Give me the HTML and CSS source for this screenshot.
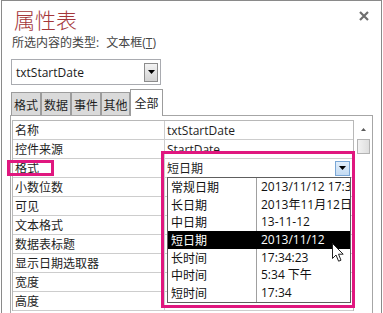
FILE: index.html
```html
<!DOCTYPE html>
<html lang="zh-CN">
<head>
<meta charset="utf-8">
<title>属性表</title>
<link rel="stylesheet" href="styles.css">
</head>
<body>
<div class="window">
  <div class="header">
    <h1 class="title">属性表</h1>
    <svg class="close" width="10" height="10" viewBox="0 0 10 10"><path d="M1 1 L9 9 M9 1 L1 9" stroke="#6e6e6e" stroke-width="2.2" fill="none"/></svg>
  </div>
  <div class="subtitle">所选内容的类型: 文本框(<u>T</u>)</div>
  <div class="combo">
    <span>txtStartDate</span>
    <span class="combo-btn"><svg width="7" height="4" viewBox="0 0 7 4"><polygon points="0,0 7,0 3.5,4" fill="#000"/></svg></span>
  </div>
  <div class="tabs">
    <div class="tab">格式</div>
    <div class="tab">数据</div>
    <div class="tab">事件</div>
    <div class="tab narrow">其他</div>
    <div class="tab active">全部</div>
  </div>
  <div class="panel">
    <div class="grid">
      <div class="row"><div class="name">名称</div><div class="val">txtStartDate</div></div>
      <div class="row"><div class="name">控件来源</div><div class="val">StartDate</div></div>
      <div class="row"><div class="name">格式</div><div class="val val-drop"><span>短日期</span><span class="drop-btn"><svg width="7" height="4" viewBox="0 0 7 4"><polygon points="0,0 7,0 3.5,4" fill="#000"/></svg></span></div></div>
      <div class="row"><div class="name">小数位数</div><div class="val"></div></div>
      <div class="row"><div class="name">可见</div><div class="val"></div></div>
      <div class="row"><div class="name">文本格式</div><div class="val"></div></div>
      <div class="row"><div class="name">数据表标题</div><div class="val"></div></div>
      <div class="row"><div class="name">显示日期选取器</div><div class="val"></div></div>
      <div class="row"><div class="name">宽度</div><div class="val"></div></div>
      <div class="row"><div class="name">高度</div><div class="val"></div></div>
    </div>
    <div class="scrollbar">
      <div class="sb-up"><svg width="5" height="3" viewBox="0 0 5 3"><polygon points="0,3 5,3 2.5,0" fill="#5a5a5a"/></svg></div>
      <div class="sb-thumb"></div>
    </div>
  </div>

  <div class="hl hl-label"></div>
  <div class="hl hl-field"></div>

  <div class="list">
    <div class="item"><div class="k">常规日期</div><div class="v">2013/11/12 17:34:23</div></div>
    <div class="item"><div class="k">长日期</div><div class="v">2013年11月12日</div></div>
    <div class="item"><div class="k">中日期</div><div class="v">13-11-12</div></div>
    <div class="item sel"><div class="k">短日期</div><div class="v">2013/11/12</div></div>
    <div class="item"><div class="k">长时间</div><div class="v">17:34:23</div></div>
    <div class="item"><div class="k">中时间</div><div class="v">5:34 下午</div></div>
    <div class="item"><div class="k">短时间</div><div class="v">17:34</div></div>
  </div>

  <svg class="cursor" width="13" height="20" viewBox="0 0 13 20"><path d="M0.5 0.5 L0.5 15.5 L4 12 L6.6 18.2 L9 17.2 L6.5 11.2 L11.2 11.2 Z" fill="#fff" stroke="#222" stroke-width="1" stroke-linejoin="round"/></svg>
</div>
</body>
</html>
```
FILE: styles.css
```css
html, body {
  margin: 0;
  padding: 0;
  background: #fff;
}
body {
  font-family: "Open Sans", "Noto Sans CJK SC", sans-serif;
  font-size: 12px;
  color: #1e1e1e;
  overflow: hidden;
}
.window {
  position: relative;
  margin-left: 1px;
  width: 379px;
  height: 312px;
  border: 1px solid #8a8a8a;
  border-bottom: none;
  background: #fff;
  overflow: hidden;
}
.header {
  display: flex;
  align-items: flex-start;
  padding-top: 8px;
}
.title {
  margin: 0 0 0 12px;
  font-family: "Noto Sans CJK SC", sans-serif;
  font-size: 21px;
  line-height: 21px;
  font-weight: 300;
  color: #a4373a;
}
.close {
  margin-left: auto;
  margin-top: 2px;
  margin-right: 12px;
}
.subtitle {
  margin: 6px 0 0 10px;
  line-height: 14px;
  color: #444;
  word-spacing: 4px;
}
.subtitle u {
  text-decoration-thickness: 1px;
  text-underline-offset: 1px;
}
.combo {
  margin: 9px 0 0 9px;
  width: 150px;
  height: 26px;
  box-sizing: border-box;
  border: 1px solid #a9abb0;
  display: flex;
  align-items: center;
  padding-left: 4px;
  color: #1a1a1a;
}
.combo-btn {
  margin-left: auto;
  margin-right: 2px;
  width: 14px;
  height: 19px;
  box-sizing: border-box;
  border: 1px solid #8c8c8c;
  background: linear-gradient(#f3f3f3, #d3d3d3);
  display: flex;
  align-items: center;
  justify-content: center;
}
.tabs {
  display: flex;
  align-items: flex-end;
  margin: 4px 0 0 9px;
  height: 26px;
}
.tab {
  width: 30px;
  height: 23px;
  box-sizing: border-box;
  border: 1px solid #9c9c9c;
  border-bottom: none;
  background: #dadada;
  display: flex;
  align-items: center;
  justify-content: center;
  font-family: "Noto Sans CJK SC", sans-serif;
  font-size: 12px;
  color: #1e1e1e;
}
.tab.narrow {
  width: 29px;
}
.tab.active {
  width: 33px;
  height: 27px;
  margin-bottom: -1px;
  background: #fff;
  position: relative;
  z-index: 1;
  padding-bottom: 2px;
}
.panel {
  margin-left: 8px;
  width: 363px;
  height: 198px;
  box-sizing: border-box;
  border: 1px solid #a6a6a6;
  border-bottom: none;
  padding: 4px 0 0 1px;
  display: flex;
  align-items: flex-start;
}
.grid {
  width: 342px;
  box-sizing: border-box;
  border: 1px solid #b8b8b8;
  border-bottom: none;
}
.row {
  display: flex;
  height: 19px;
  box-sizing: border-box;
  border-bottom: 1px solid #cdcdcd;
}
.name {
  width: 152px;
  box-sizing: border-box;
  padding: 1px 0 0 2px;
  border-right: 1px solid #cdcdcd;
  line-height: 17px;
  white-space: nowrap;
}
.val {
  flex: 1;
  padding: 1px 0 0 2px;
  line-height: 17px;
  white-space: nowrap;
  overflow: hidden;
}
.val-drop {
  display: flex;
  align-items: center;
  padding-top: 0;
}
.drop-btn {
  margin-left: auto;
  margin-right: 3px;
  width: 15px;
  height: 15px;
  box-sizing: border-box;
  border: 1px solid #7aa7d6;
  background: linear-gradient(#e1eefb, #c4dbf2);
  display: flex;
  align-items: center;
  justify-content: center;
}
.scrollbar {
  width: 18px;
  display: flex;
  flex-direction: column;
  align-items: center;
}
.sb-up {
  height: 19px;
  display: flex;
  align-items: center;
  justify-content: center;
}
.sb-thumb {
  width: 13px;
  height: 15px;
  box-sizing: border-box;
  border: 1px solid #b3b3b3;
  background: linear-gradient(90deg, #f2f2f2, #dedede);
}
.hl {
  position: absolute;
  box-sizing: border-box;
  border: 3px solid #e0177f;
  z-index: 3;
}
.hl-label {
  left: 5px;
  top: 159px;
  width: 47px;
  height: 16px;
}
.hl-field {
  left: 159px;
  top: 150px;
  width: 194px;
  height: 157px;
}
.list {
  position: absolute;
  left: 165px;
  top: 176px;
  width: 184px;
  box-sizing: border-box;
  border: 1px solid #5e5e5e;
  background: #fff;
  z-index: 2;
}
.item {
  display: flex;
  height: 17.7px;
  line-height: 17.7px;
  color: #111;
  white-space: nowrap;
}
.item .k {
  width: 89px;
  box-sizing: border-box;
  padding-left: 3px;
  border-right: 1px solid #a0a0a0;
  font-family: "Noto Sans CJK SC", sans-serif;
}
.item .v {
  flex: 1;
  padding-left: 4px;
  overflow: hidden;
}
.item.sel {
  background: #000;
  color: #fff;
}
.item.sel .k {
  border-right-color: #000;
}
.cursor {
  position: absolute;
  left: 330px;
  top: 242px;
  z-index: 4;
}
```
